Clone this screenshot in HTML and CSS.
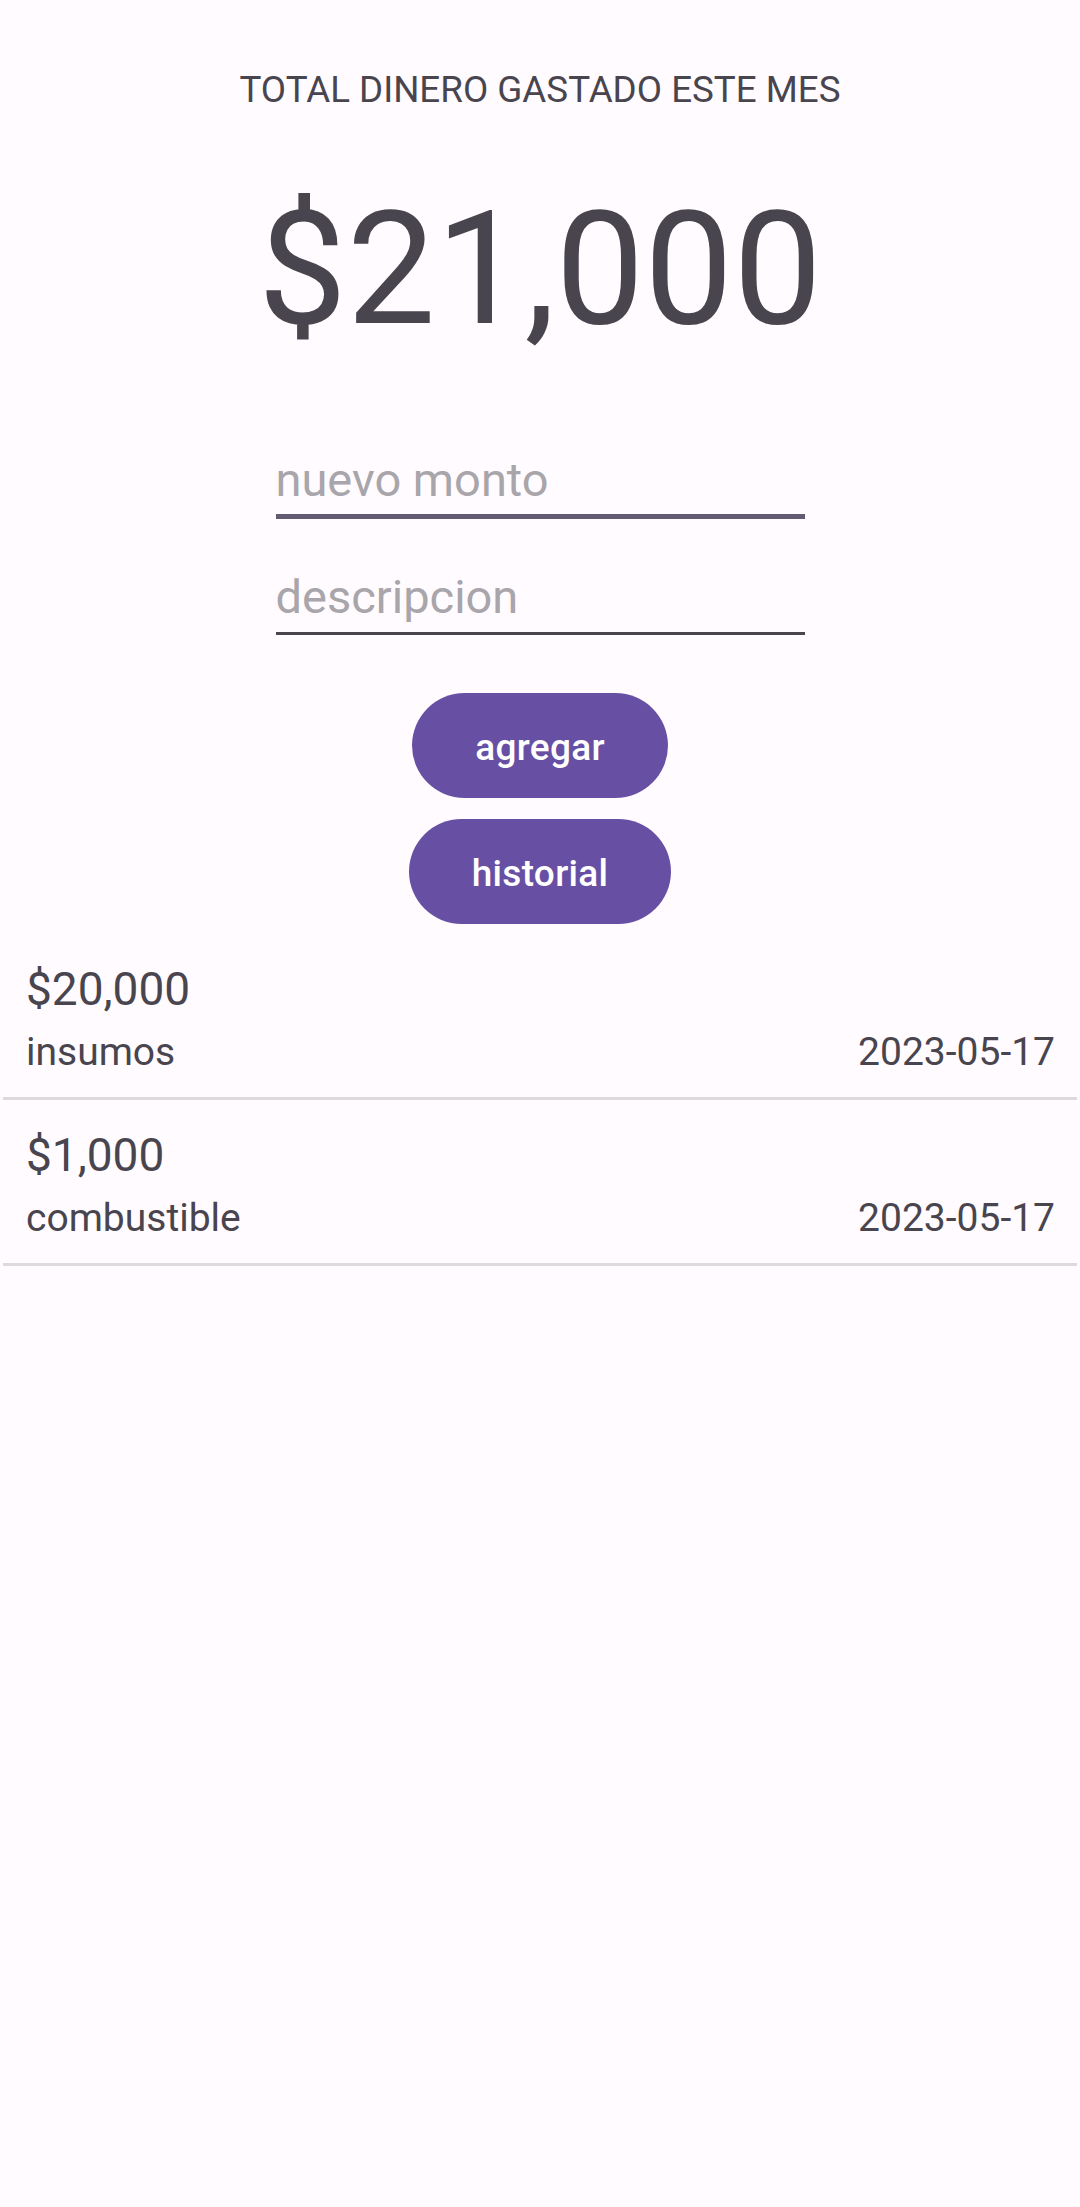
FILE: index.html
```html
<!DOCTYPE html>
<html lang="es">
<head>
<meta charset="utf-8">
<title>Gastos</title>
<link rel="stylesheet" href="styles.css">
</head>
<body>
<main class="screen">
  <header class="summary">
    <h1 class="summary-title">TOTAL DINERO GASTADO ESTE MES</h1>
    <div class="summary-total">$21,000</div>
  </header>
  <form class="entry-form">
    <div class="field field-focused"><span class="placeholder">nuevo monto</span></div>
    <div class="field"><span class="placeholder">descripcion</span></div>
    <div class="actions">
      <button type="button" class="btn">agregar</button>
      <button type="button" class="btn">historial</button>
    </div>
  </form>
  <ul class="expenses">
    <li class="expense">
      <div class="expense-amount">$20,000</div>
      <div class="expense-meta"><span>insumos</span><span>2023-05-17</span></div>
    </li>
    <li class="expense">
      <div class="expense-amount">$1,000</div>
      <div class="expense-meta"><span>combustible</span><span>2023-05-17</span></div>
    </li>
  </ul>
</main>
</body>
</html>
```
FILE: styles.css
```css
html, body {
  margin: 0;
  padding: 0;
  background: #FFFBFE;
}
body {
  font-family: Roboto, "Noto Sans", sans-serif;
  color: #49454F;
  width: 1080px;
  min-height: 2207px;
}
.screen {
  display: flex;
  flex-direction: column;
}
.summary {
  display: flex;
  flex-direction: column;
  align-items: center;
  padding-top: 68px;
}
.summary-title {
  margin: 0;
  font-size: 36.75px;
  line-height: 43px;
  font-weight: 400;
}
.summary-total {
  margin-top: 66px;
  font-size: 158px;
  line-height: 185px;
  font-weight: 400;
}
.entry-form {
  display: flex;
  flex-direction: column;
  align-items: center;
  margin: 0;
}
.field {
  width: 529px;
  box-sizing: border-box;
  padding-bottom: 8px;
  border-bottom: 3px solid #49454F;
  font-size: 47px;
  line-height: 55px;
  margin-top: 50px;
}
.field-focused {
  margin-top: 90px;
  padding-bottom: 7px;
  border-bottom: 5px solid #625B71;
}
.placeholder {
  color: #A8A5AB;
}
.actions {
  display: flex;
  flex-direction: column;
  align-items: center;
  gap: 21px;
  margin-top: 58px;
}
.btn {
  height: 105px;
  padding: 4px 63px 0;
  border: none;
  border-radius: 53px;
  background: #6750A4;
  color: #FFFFFF;
  font-family: Roboto, "Noto Sans", sans-serif;
  font-size: 37px;
  font-weight: 500;
  letter-spacing: 0.3px;
}
.expenses {
  list-style: none;
  margin: 10px 0 0;
  padding: 0;
}
.expense {
  margin: 0 3px;
  padding: 29px 22px 22px 23px;
  border-bottom: 3px solid #DCDADD;
}
.expense-amount {
  font-size: 46px;
  line-height: 53px;
}
.expense-meta {
  display: flex;
  justify-content: space-between;
  margin-top: 13px;
  font-size: 39px;
  line-height: 46px;
}
```
